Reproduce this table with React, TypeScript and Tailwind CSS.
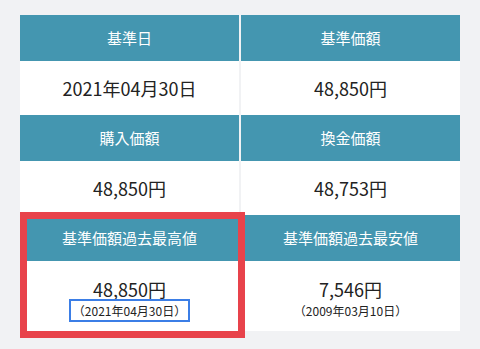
import React from 'react';

interface Cell {
  label: string;
  value: string;
  date?: string;
}

const rows: Cell[][] = [
  [
    { label: '基準日', value: '2021年04月30日' },
    { label: '基準価額', value: '48,850円' },
  ],
  [
    { label: '購入価額', value: '48,850円' },
    { label: '換金価額', value: '48,753円' },
  ],
  [
    { label: '基準価額過去最高値', value: '48,850円', date: '（2021年04月30日）' },
    { label: '基準価額過去最安値', value: '7,546円', date: '（2009年03月10日）' },
  ],
];

const HeadCell: React.FC<{ label: string }> = ({ label }) => (
  <div className="h-[46px] bg-[#4496b0] flex items-center justify-center text-[15px] text-white">
    {label}
  </div>
);

const ValueCell: React.FC<{ cell: Cell; marked?: boolean }> = ({ cell, marked }) => {
  if (!cell.date) {
    return (
      <div className="h-[54px] bg-white flex items-center justify-center text-[18px] leading-[22px] text-[#222]">
        {cell.value}
      </div>
    );
  }
  return (
    <div className="h-[70px] bg-white flex flex-col items-center pt-[18px] text-[#222]">
      <div className="text-[18px] leading-[20px]">{cell.value}</div>
      <div
        className={`text-[12px] leading-[19px] px-[2px] border-2 ${
          marked ? 'border-[#3b7ee6]' : 'border-transparent'
        }`}
      >
        {cell.date}
      </div>
    </div>
  );
};

export default function App() {
  return (
    <div
      className="relative w-[480px] h-[349px] bg-[#f1f2f4] pt-[15px] pl-[20px]"
      style={{ fontFamily: '"Noto Sans CJK JP", "Noto Sans", sans-serif' }}
    >
      <div className="w-[440px] grid grid-cols-2 gap-x-[2px]">
        {rows.map((row, i) =>
          row.map((cell, j) => (
            <div key={`${i}-${j}`} className="flex flex-col">
              <HeadCell label={cell.label} />
              <ValueCell cell={cell} marked={i === 2 && j === 0} />
            </div>
          ))
        )}
      </div>

      {/* annotation frame */}
      <div className="absolute left-[20px] top-[212px] w-[225px] h-[126px] border-[7px] border-[#e8434b] pointer-events-none" />
    </div>
  );
}
